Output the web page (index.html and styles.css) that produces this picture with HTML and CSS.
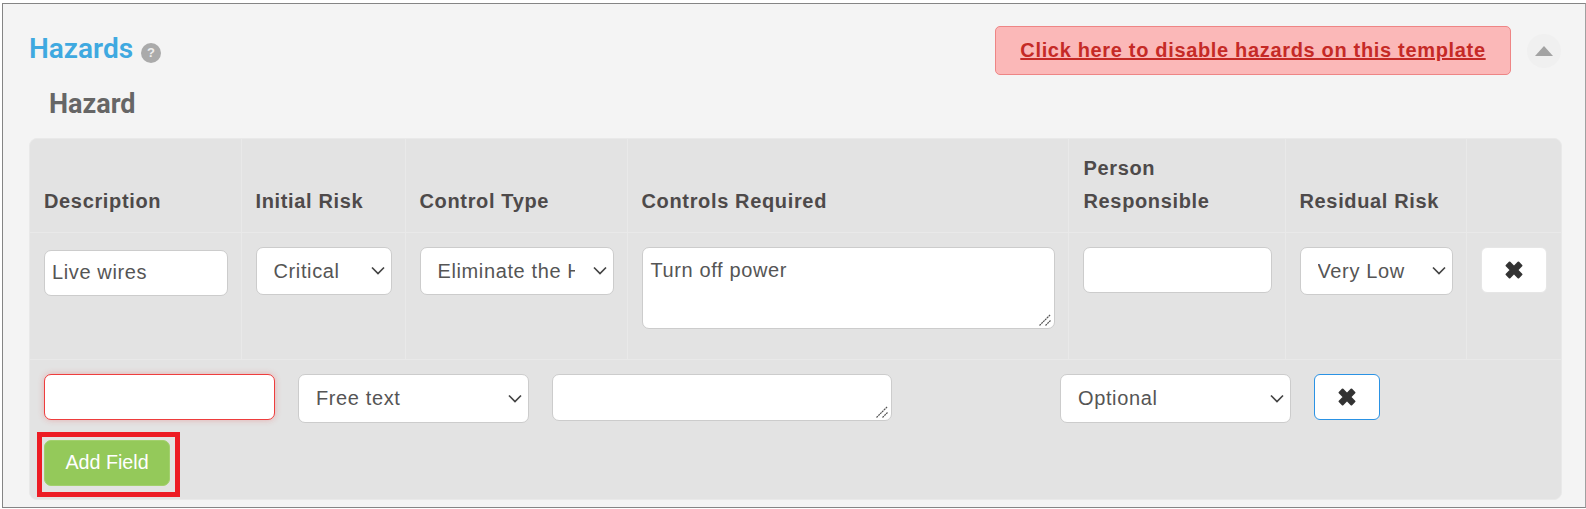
FILE: index.html
```html
<!DOCTYPE html>
<html lang="en">
<head>
<meta charset="utf-8">
<title>Hazards</title>
<link rel="stylesheet" href="styles.css">
</head>
<body>
<section class="panel">
  <header class="panel-head">
    <h2 class="title">Hazards</h2>
    <span class="help">?</span>
    <a class="disable-link" href="#">Click here to disable hazards on this template</a>
    <button class="collapse" type="button" aria-label="Collapse"><svg width="18" height="10" viewBox="0 0 18 10"><path d="M9 0 18 10H0Z" fill="#a3a3a3"/></svg></button>
  </header>
  <h3 class="subtitle">Hazard</h3>
  <div class="box">
    <table class="grid">
      <colgroup>
        <col class="c1"><col class="c2"><col class="c3"><col class="c4"><col class="c5"><col class="c6"><col class="c7">
      </colgroup>
      <thead>
        <tr>
          <th>Description</th>
          <th>Initial Risk</th>
          <th>Control Type</th>
          <th>Controls Required</th>
          <th>Person<br>Responsible</th>
          <th>Residual Risk</th>
          <th></th>
        </tr>
      </thead>
      <tbody>
        <tr>
          <td><input class="field desc" type="text" value="Live wires"></td>
          <td><select class="field pick"><option>Critical</option></select></td>
          <td><select class="field pick"><option>Eliminate the Hazard</option></select></td>
          <td><textarea class="field notes">Turn off power</textarea></td>
          <td><input class="field person" type="text"></td>
          <td><select class="field pick"><option>Very Low</option></select></td>
          <td><button class="remove" type="button" aria-label="Remove"><svg width="18" height="18" viewBox="0 0 18 18"><path d="M4.6 1.5 9 5.9 13.4 1.5 16.5 4.6 12.1 9 16.5 13.4 13.4 16.5 9 12.1 4.6 16.5 1.5 13.4 5.9 9 1.5 4.6Z" fill="#333" stroke="#333" stroke-width="2" stroke-linejoin="round"/></svg></button></td>
        </tr>
      </tbody>
    </table>
    <div class="builder">
      <div class="builder-row">
        <input class="field name invalid" type="text">
        <select class="field pick wide"><option>Free text</option></select>
        <textarea class="field short"></textarea>
        <select class="field pick wide"><option>Optional</option></select>
        <button class="remove focus" type="button" aria-label="Remove"><svg width="18" height="18" viewBox="0 0 18 18"><path d="M4.6 1.5 9 5.9 13.4 1.5 16.5 4.6 12.1 9 16.5 13.4 13.4 16.5 9 12.1 4.6 16.5 1.5 13.4 5.9 9 1.5 4.6Z" fill="#333" stroke="#333" stroke-width="2" stroke-linejoin="round"/></svg></button>
      </div>
      <div class="add-wrap">
        <button class="add" type="button">Add Field</button>
        <span class="highlight"></span>
      </div>
    </div>
  </div>
</section>
</body>
</html>
```
FILE: styles.css
```css
* { box-sizing: border-box; }
html, body { margin: 0; background: #fff; }
body { padding: 3px 0 0 2px; font-family: Roboto, "Liberation Sans", sans-serif; color: #555; }
.panel { width: 1584px; height: 505px; background: #f4f4f4; border: 1px solid #858585; border-right-color: #a0a0a0; padding: 22px 24px 0 26px; }
.panel-head { display: flex; align-items: center; height: 50px; }
.title { margin: 0 0 4px; font-size: 28px; font-weight: 600; color: #3fa9e0; line-height: 46px; }
.help { margin: 3px 0 0 8px; width: 20px; height: 20px; border-radius: 50%; background: #aaa; color: #eee; font: bold 13px/20px "Liberation Sans", sans-serif; text-align: center; }
.disable-link { margin: 0 0 2px auto; width: 516px; height: 49px; display: flex; align-items: center; justify-content: center; background: #fbb8b8; border: 1px solid #ee8585; border-radius: 5px; color: #c52a26; font: bold 20px "Liberation Sans", sans-serif; letter-spacing: .67px; text-decoration: underline; }
.collapse { margin: 0 0 0 16px; padding: 0; width: 34px; height: 34px; display: flex; align-items: center; justify-content: center; border: 0; border-radius: 50%; background: #f0f0f0; }
.subtitle { margin: 10px 0 0 20px; font-size: 27px; line-height: 36px; font-weight: 700; color: #666; height: 52px; }
.box { width: 1533px; height: 362px; background: #e3e3e3; border: 1px solid #e9e9e9; border-radius: 8px; }
.grid { width: 100%; table-layout: fixed; border-collapse: collapse; }
.c1 { width: 211px; } .c2 { width: 164px; } .c3 { width: 222px; } .c4 { width: 441px; } .c5 { width: 217px; } .c6 { width: 181px; } .c7 { width: auto; }
.grid th { height: 93px; padding: 0 13px 14px 14px; vertical-align: bottom; text-align: left; font: bold 20px/33px "Liberation Sans", sans-serif; letter-spacing: .65px; color: #4e4a4a; border-right: 1px solid #e9e9e9; border-bottom: 1px solid #e9e9e9; }
.grid td { height: 127px; padding: 14px 13px 0 14px; vertical-align: top; border-right: 1px solid #e9e9e9; border-bottom: 1px solid #e9e9e9; }
.grid th:nth-child(5) { padding-left: 15px; }
.grid th:last-child, .grid td:last-child { border-right: 0; }
.field { display: block; background: #fff; border: 1px solid #ccc; border-radius: 7px; color: #555; font: 20px/1.3 "Liberation Sans", sans-serif; letter-spacing: .62px; outline: 0; }
input.field { padding: 0 7px; }
textarea.field { resize: none; background-image: url("data:image/svg+xml,%3Csvg xmlns='http://www.w3.org/2000/svg' width='12' height='12' viewBox='0 0 12 12'%3E%3Cpath d='M.5 11.5 11.5.5M6.5 11.5 11.5 6.5' fill='none' stroke='%23555' stroke-width='1.2' stroke-dasharray='2 .6'/%3E%3C/svg%3E"); background-repeat: no-repeat; background-position: right 3px bottom 2px; }
.pick { appearance: none; width: 100%; height: 48px; padding: 0 38px 0 17px; background-image: url("data:image/svg+xml,%3Csvg xmlns='http://www.w3.org/2000/svg' width='14' height='9' viewBox='0 0 14 9'%3E%3Cpath d='M1 1.5 7 7.5 13 1.5' fill='none' stroke='%23444' stroke-width='1.7'/%3E%3C/svg%3E"); background-repeat: no-repeat; background-position: right 6px center; }
.desc { width: 184px; height: 46px; margin-top: 3px; }
.notes { width: 100%; height: 82px; padding: 9px 8px 5px; }
.person { width: 100%; height: 46px; }
.remove { display: flex; align-items: center; justify-content: center; width: 66px; height: 46px; padding: 0; background: #fff; border: 1px solid #e6e6e6; border-radius: 6px; }
.builder { padding: 14px 14px 0; }
.builder-row { display: flex; align-items: flex-start; gap: 23px; }
.name { width: 231px; height: 46px; }
.invalid { border-color: #ee3d3d; box-shadow: 0 0 6px rgba(238, 61, 61, .3); }
.wide { width: 231px; height: 49px; }
.short { width: 340px; height: 47px; margin-right: 145px; }
.focus { border-color: #2a92e4; }
.add-wrap { position: relative; margin-top: 17px; width: 126px; }
.add { display: block; width: 126px; height: 46px; padding: 0; background: #94c95a; border: 1px solid #a2d06d; border-radius: 7px; color: #fff; font: 19.7px "Liberation Sans", sans-serif; }
.highlight { position: absolute; left: -7px; top: -8px; width: 143px; height: 65px; border: 5px solid #ed1c24; pointer-events: none; }
```
